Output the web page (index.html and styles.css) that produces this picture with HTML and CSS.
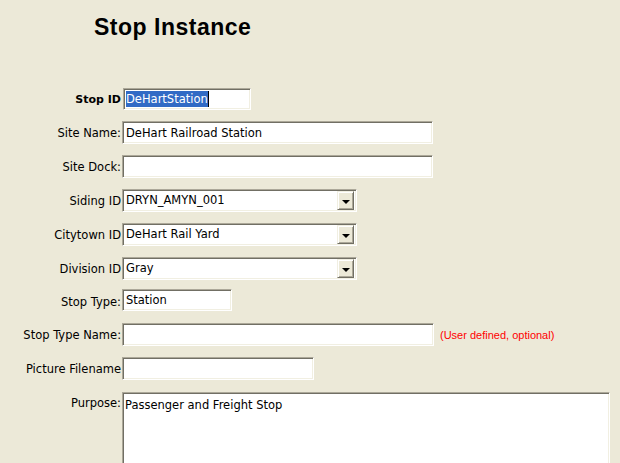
FILE: index.html
```html
<!DOCTYPE html>
<html lang="en">

<head>
  <meta charset="UTF-8">
  <meta name="viewport" content="width=device-width, initial-scale=1.0">
  <title>Stop Instance</title>

  <link rel="stylesheet" href="styles.css">
</head>

<body>
  <main class="page">
    <h1 class="title">Stop Instance</h1>

    <div class="fields">
      <label class="label strong" for="stop-id">Stop ID</label>
      <div class="box w-id" id="stop-id"><span class="selected">DeHartStation</span><span class="caret"></span></div>

      <label class="label" for="site-name">Site Name:</label>
      <input class="box w-long" type="text" id="site-name" value="DeHart Railroad Station">

      <label class="label" for="site-dock">Site Dock:</label>
      <input class="box w-long" type="text" id="site-dock" value="">

      <label class="label">Siding ID</label>
      <div class="box select">
        <span class="select_text">DRYN_AMYN_001</span>
        <span class="select_btn"><span class="arrow"></span></span>
      </div>

      <label class="label">Citytown ID</label>
      <div class="box select">
        <span class="select_text">DeHart Rail Yard</span>
        <span class="select_btn"><span class="arrow"></span></span>
      </div>

      <label class="label">Division ID</label>
      <div class="box select">
        <span class="select_text">Gray</span>
        <span class="select_btn"><span class="arrow"></span></span>
      </div>

      <label class="label" for="stop-type">Stop Type:</label>
      <input class="box w-type tight" type="text" id="stop-type" value="Station">

      <label class="label" for="stop-type-name">Stop Type Name:</label>
      <div class="inline">
        <input class="box w-long2" type="text" id="stop-type-name" value="">
        <small class="note">(User defined, optional)</small>
      </div>

      <label class="label" for="picture">Picture Filename</label>
      <input class="box w-pic" type="text" id="picture" value="">

      <label class="label top" for="purpose">Purpose:</label>
      <textarea class="box area" id="purpose">Passenger and Freight Stop</textarea>
    </div>
  </main>
</body>

</html>
```

FILE: styles.css
```css
body {
  margin: 0;
  background-color: #ECE9D8;
  font-family: "DejaVu Sans", Verdana, sans-serif;
  font-size: 11.5px;
  color: #000;
  overflow: hidden;
}

.title {
  margin: 0 0 47px 0;
  padding: 14px 0 0 94px;

  font-family: "Liberation Sans", Arial, sans-serif;
  font-size: 23px;
  line-height: 27px;
  letter-spacing: 0.5px;
  font-weight: bold;
}

.fields {
  display: grid;
  grid-template-columns: 121px 1fr;
  column-gap: 1px;
  row-gap: 11px;
  align-items: center;
}

.label {
  text-align: right;
  white-space: nowrap;
}

.label.strong {
  font-weight: bold;
  font-size: 11px;
}

.label.top {
  align-self: start;
  padding-top: 5px;
}

.box {
  box-sizing: border-box;
  height: 23px;
  margin: 0;
  padding: 2px 3px;

  background-color: #fff;
  border: 1px solid;
  border-color: #ACA899 #fff #fff #ACA899;
  box-shadow: inset 1px 1px 0 #716F64, inset -1px -1px 0 #F1EFE2;

  font-family: "DejaVu Sans", Verdana, sans-serif;
  font-size: 11.5px;
  line-height: 17px;
  color: #000;
  outline: none;
}

/* the Stop Type box sits a bit higher than the others */
.box.tight {
  height: 22px;
  margin-top: -2px;
  margin-bottom: 1px;
}

.w-id {
  width: 128px;
  height: 22px;
  margin-left: 1px;
  display: flex;
  align-items: center;
  padding-left: 2px;
}

.selected {
  background-color: #316AC5;
  color: #fff;
  line-height: 16px;
}

.caret {
  width: 1px;
  height: 16px;
  background-color: #000;
}

.w-long {
  width: 311px;
}

.w-long2 {
  width: 312px;
}

.w-type {
  width: 110px;
}

.w-pic {
  width: 192px;
}

.select {
  width: 235px;
  display: flex;
  align-items: center;
  justify-content: space-between;
  padding: 2px 2px 2px 3px;
}

.select_btn {
  box-sizing: border-box;
  width: 17px;
  height: 19px;

  display: flex;
  align-items: center;
  justify-content: center;

  background-color: #ECE9D8;
  border: 1px solid;
  border-color: #F1EFE2 #716F64 #716F64 #F1EFE2;
  box-shadow: inset 1px 1px 0 #fff, inset -1px -1px 0 #ACA899;
}

.arrow {
  width: 0;
  height: 0;
  margin-top: 2px;
  border-left: 4px solid transparent;
  border-right: 4px solid transparent;
  border-top: 4px solid #000;
}

.inline {
  display: flex;
  align-items: center;
  gap: 6px;
}

.note {
  color: #FF0000;
  font-family: "Liberation Sans", Arial, sans-serif;
  font-size: 11px;
}

.area {
  width: 488px;
  height: 110px;
  margin-top: 1px;
  resize: none;
  padding: 4px 2px;
  overflow: hidden;
}
```
